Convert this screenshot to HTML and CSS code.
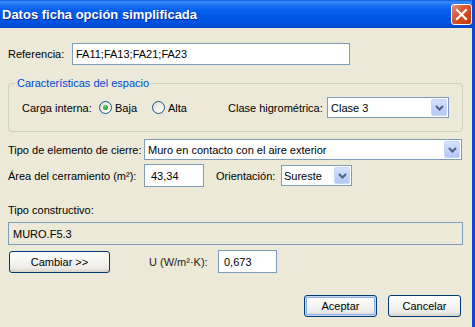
FILE: index.html
```html
<!DOCTYPE html>
<html lang="es">
  <head>
    <meta charset="UTF-8" />
    <title>Datos ficha opción simplificada</title>
    <link rel="stylesheet" href="styles.css">
  </head>
  <body>
    <div class="window">
      <div class="titlebar">
        <span class="title">Datos ficha opción simplificada</span>
        <span class="close">
          <svg width="19" height="19" viewBox="0 0 19 19">
            <path d="M5 5 L14 14 M14 5 L5 14" stroke="#fff" stroke-width="2.2" stroke-linecap="square" fill="none" />
          </svg>
        </span>
      </div>

      <div class="content">
        <div class="row row-ref">
          <label class="lbl lbl-ref" for="ref">Referencia:</label>
          <input class="field field-ref" id="ref" type="text" value="FA11;FA13;FA21;FA23" />
        </div>

        <div class="group">
          <span class="group-title">Características del espacio</span>
          <div class="row row-group">
            <span class="lbl lbl-carga">Carga interna:</span>
            <span class="radio-opt opt-baja"><span class="radio checked"></span>Baja</span>
            <span class="radio-opt opt-alta"><span class="radio"></span>Alta</span>
            <span class="lbl lbl-clase">Clase higrométrica:</span>
            <div class="select select-clase">
              <span class="select-text">Clase 3</span>
              <span class="select-btn">
                <svg width="9" height="6" viewBox="0 0 9 6"><path d="M1 1 L4.5 4.5 L8 1" stroke="#4D6185" stroke-width="2" fill="none" /></svg>
              </span>
            </div>
          </div>
        </div>

        <div class="row row-tipo">
          <span class="lbl lbl-wide">Tipo de elemento de cierre:</span>
          <div class="select select-tipo">
            <span class="select-text">Muro en contacto con el aire exterior</span>
            <span class="select-btn">
              <svg width="9" height="6" viewBox="0 0 9 6"><path d="M1 1 L4.5 4.5 L8 1" stroke="#4D6185" stroke-width="2" fill="none" /></svg>
            </span>
          </div>
        </div>

        <div class="row row-area">
          <label class="lbl lbl-wide" for="area">Área del cerramiento (m²):</label>
          <input class="field field-area" id="area" type="text" value="43,34" />
          <span class="lbl lbl-orient">Orientación:</span>
          <div class="select select-orient">
            <span class="select-text">Sureste</span>
            <span class="select-btn">
              <svg width="9" height="6" viewBox="0 0 9 6"><path d="M1 1 L4.5 4.5 L8 1" stroke="#4D6185" stroke-width="2" fill="none" /></svg>
            </span>
          </div>
        </div>

        <div class="lbl lbl-constr">Tipo constructivo:</div>
        <div class="constr-box">MURO.F5.3</div>

        <div class="row row-cambiar">
          <button class="btn btn-cambiar">Cambiar &gt;&gt;</button>
          <label class="lbl lbl-u" for="u">U (W/m²·K):</label>
          <input class="field field-u" id="u" type="text" value="0,673" />
        </div>

        <div class="footer">
          <button class="btn btn-default">Aceptar</button>
          <button class="btn">Cancelar</button>
        </div>
      </div>
    </div>
  </body>
</html>
```

FILE: styles.css
```css
* {
  box-sizing: border-box;
}

body {
  margin: 0;
  font-family: "Liberation Sans", Arial, sans-serif;
  font-size: 11px;
  color: #000000;
}

.window {
  width: 475px;
  height: 327px;
  background-color: #ECE9D8;
  border-right: 3px solid #0A4BD6;
  display: flex;
  flex-direction: column;
}

/* barra de titulo estilo XP */
.titlebar {
  height: 28px;
  flex-shrink: 0;
  display: flex;
  align-items: center;
  justify-content: space-between;
  padding-left: 2px;
  background: linear-gradient(to bottom, #0A5AE0 0, #3D8EFA 2px, #1A72F5 5px, #0560EE 10px, #0056E6 18px, #0050DD 24px, #0046CC 28px);
}

.title {
  color: #ffffff;
  font-weight: bold;
  font-size: 13px;
  padding-top: 1px;
  text-shadow: 1px 1px 0 #0B2A8F;
}

.close {
  width: 21px;
  height: 21px;
  border: 1px solid #ffffff;
  border-radius: 3px;
  background: linear-gradient(135deg, #E9937A 0, #DA5B35 35%, #CE4519 70%, #C0390E 100%);
  display: flex;
  align-items: center;
  justify-content: center;
}

.content {
  flex: 1;
  display: flex;
  flex-direction: column;
  padding: 15px 9px 0 8px;
}

.row {
  display: flex;
  align-items: center;
}

.lbl {
  white-space: nowrap;
}

.field {
  border: 1px solid #7F9DB9;
  background-color: #ffffff;
  font-family: inherit;
  font-size: 11px;
  color: #000000;
  margin: 0;
  outline: none;
}

.row-ref {
  height: 22px;
}

.lbl-ref {
  width: 64px;
}

.field-ref {
  width: 278px;
  height: 22px;
  padding: 0 3px;
}

/* grupo */
.group {
  margin-top: 18px;
  border: 1px solid #D0D0BF;
  border-radius: 4px;
  padding: 0 0 13px 13px;
}

.group-title {
  display: block;
  width: max-content;
  margin: -8px 0 0 -7px;
  padding: 0 2px;
  line-height: 14px;
  color: #0046D5;
  background-color: #ECE9D8;
}

.row-group {
  margin-top: 7px;
  height: 21px;
}

.lbl-carga {
  width: 77px;
}

.radio-opt {
  display: flex;
  align-items: center;
  gap: 3px;
}

.opt-baja {
  width: 53px;
}

.opt-alta {
  width: 76px;
}

.radio {
  width: 13px;
  height: 13px;
  border: 1px solid #1C5180;
  border-radius: 50%;
  background: linear-gradient(135deg, #DCDCD5 0, #F4F4F0 60%, #ffffff 100%);
  display: flex;
  align-items: center;
  justify-content: center;
}

.radio.checked::after {
  content: "";
  width: 5px;
  height: 5px;
  border-radius: 50%;
  background: radial-gradient(circle at 35% 35%, #5BD55B, #21A121 70%);
}

.lbl-clase {
  width: 99px;
}

/* combos */
.select {
  display: flex;
  align-items: stretch;
  height: 21px;
  border: 1px solid #7F9DB9;
  background-color: #ffffff;
}

.select-text {
  flex: 1;
  display: flex;
  align-items: center;
  padding-left: 3px;
  white-space: nowrap;
  overflow: hidden;
}

.select-btn {
  width: 16px;
  margin: 1px;
  border-radius: 2px;
  background: linear-gradient(to bottom, #D4E0FD 0, #C2D3FB 50%, #B4C8F6 100%);
  border: 1px solid #C8D6F8;
  display: flex;
  align-items: center;
  justify-content: center;
}

.select-clase {
  width: 122px;
}

.row-tipo {
  margin-top: 7px;
  height: 21px;
}

.lbl-wide {
  width: 136px;
}

.select-tipo {
  width: 318px;
}

.row-area {
  margin-top: 4px;
  height: 23px;
}

.field-area {
  width: 60px;
  height: 23px;
  padding: 0 6px;
}

.lbl-orient {
  margin-left: 12px;
  width: 65px;
}

.select-orient {
  width: 71px;
}

.select-orient .select-text {
  padding-left: 2px;
}

.lbl-constr {
  margin-top: 17px;
  line-height: 13px;
}

.constr-box {
  margin-top: 5px;
  height: 23px;
  border: 1px solid #7F9DB9;
  padding-left: 4px;
  display: flex;
  align-items: center;
}

.row-cambiar {
  margin-top: 5px;
  height: 23px;
}

/* botones */
.btn {
  height: 22px;
  border: 1px solid #003C74;
  border-radius: 3px;
  background: linear-gradient(to bottom, #FFFFFF 0, #F6F6F2 40%, #ECEBE6 80%, #D8D3C8 100%);
  font-family: inherit;
  font-size: 11px;
  color: #000000;
  padding: 0;
}

.btn-cambiar {
  width: 101px;
  margin-left: 1px;
}

.lbl-u {
  margin-left: 39px;
  width: 69px;
  color: #222222;
}

.field-u {
  width: 59px;
  height: 23px;
  padding: 0 5px;
}

.footer {
  margin-top: 22px;
  display: flex;
  justify-content: flex-end;
  gap: 11px;
  padding-right: 2px;
}

.footer .btn {
  width: 73px;
}

.btn-default {
  box-shadow: inset 0 0 0 1px #C4D8F8, inset 0 0 0 2px #8EB0E8;
}
```
